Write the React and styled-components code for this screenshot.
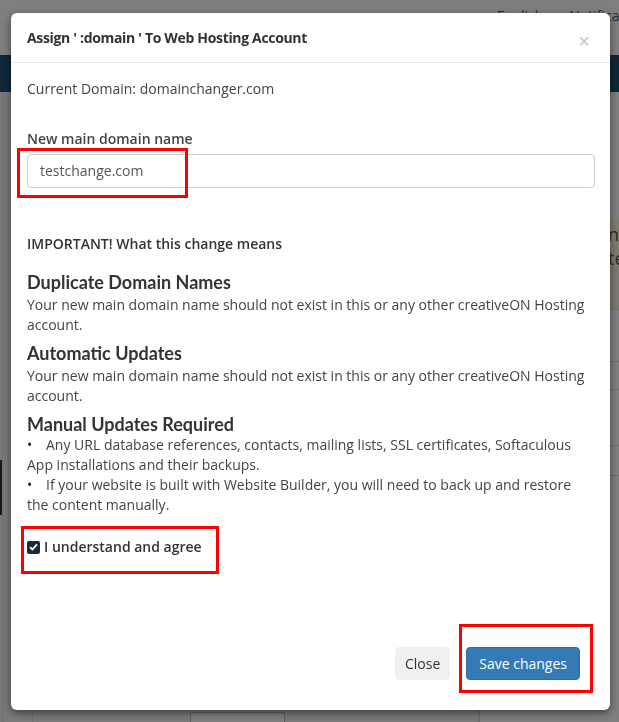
import React from "react"
import styled, { createGlobalStyle } from "styled-components"

const GlobalStyle = createGlobalStyle`
    html, body {
        margin: 0;
        padding: 0;
        background: #f4f4f4;
        font-family: "Open Sans", "Liberation Sans", sans-serif;
        overflow: hidden;
    }
    * {
        box-sizing: border-box;
    }
`;

/* page behind the dialog */

const Page = styled.div`
    width: 619px;
    height: 722px;
    overflow: hidden;
    background: #f4f4f4;
`;

const TopBar = styled.div`
    height: 55px;
    background: #fff;
    display: flex;
    gap: 26px;
    padding: 6px 0 0 497px;
    font-size: 14px;
    color: #555;
    white-space: nowrap;
    overflow: hidden;
`;

const NavBar = styled.div`
    height: 37px;
    background: #1d4e6e;
`;

const Content = styled.div`
    display: grid;
    grid-template-columns: 3px 30px 1fr 25px 140px;
    height: 630px;
`;

const Rail = styled.div`
    border-right: 1px solid #ddd;
    padding-top: 368px;
`;

const RailBlock = styled.div`
    height: 55px;
    background: #333;
`;

const Gutter = styled.div`
    border-right: 1px solid #ddd;
`;

const MainCol = styled.div`
    display: flex;
    flex-direction: column;
    justify-content: flex-end;
    padding: 0 0 0 157px;
`;

const SmallButton = styled.div`
    width: 95px;
    height: 10px;
    border: 1px solid #bbb;
    border-bottom: none;
    border-radius: 3px 3px 0 0;
    background: #fff;
`;

const Sidebar = styled.div`
    border-left: 1px solid #ddd;
    padding-top: 126px;
    display: flex;
    flex-direction: column;
    background: #fff;
    overflow: hidden;
`;

const Alert = styled.div`
    height: 50px;
    background: #fcf8d8;
    color: #555;
    font-size: 18px;
    line-height: 24px;
    padding: 4px 0 0 128px;
    white-space: nowrap;
`;

const Note = styled.div`
    height: 42px;
    background: #f7f0df;
    border-bottom: 1px solid #ddd;
`;

const Row = styled.div`
    height: ${p => p.h}px;
    border-bottom: 1px solid #ddd;
    font-size: 14px;
    color: ${p => p.c || "#555"};
    font-style: ${p => p.i ? "italic" : "normal"};
    padding: ${p => p.pt || 0}px 0 0 140px;
    white-space: nowrap;
`;

const BlueTab = styled.div`
    margin: 0 0 0 144px;
    width: 12px;
    height: 24px;
    background: #1d5f8e;
    border-radius: 3px 0 0 3px;
`;

const Backdrop = styled.div`
    position: fixed;
    inset: 0;
    background: rgba(0, 0, 0, 0.5);
`;

/* the dialog */

const Dialog = styled.div`
    position: fixed;
    top: 13px;
    left: 11px;
    width: 599px;
    background: #fff;
    border-radius: 6px;
    box-shadow: 0 3px 9px rgba(0, 0, 0, 0.5);
    color: #444;
`;

const Header = styled.div`
    height: 50px;
    border-bottom: 1px solid #e5e5e5;
    display: flex;
    align-items: center;
    justify-content: space-between;
    padding: 0 20px 0 16px;
`;

const Title = styled.h4`
    margin: 0;
    font-size: 14px;
    font-weight: 700;
    letter-spacing: -0.33px;
    color: #333;
`;

const CloseX = styled.span`
    font-size: 20px;
    color: #c4c4c4;
    font-family: "Liberation Sans", sans-serif;
    padding-top: 8px;
`;

const Body = styled.div`
    padding: 16px 15px 0 16px;
    font-size: 14px;
    line-height: 20px;
`;

const Line = styled.div`
    margin-top: ${p => p.mt || 0}px;
`;

const Label = styled.div`
    margin-top: 30px;
    font-weight: 600;
`;

const Annotated = styled.div`
    position: relative;
    margin-top: ${p => p.mt || 0}px;
`;

const RedBox = styled.div`
    position: absolute;
    border: 3px solid #f00;
    left: ${p => p.l}px;
    top: ${p => p.t}px;
    width: ${p => p.w}px;
    height: ${p => p.h}px;
    pointer-events: none;
`;

const Input = styled.div`
    height: 34px;
    border: 1px solid #ccc;
    border-radius: 4px;
    padding: 6px 12px;
    color: #555;
`;

const Important = styled.div`
    margin-top: 46px;
    font-weight: 600;
    font-size: 14px;
    color: #333;
`;

const Heading = styled.div`
    margin-top: ${p => p.mt}px;
    margin-bottom: ${p => p.mb}px;
    font-family: Lato, "Open Sans", sans-serif;
    font-weight: 700;
    font-size: 18px;
    line-height: 22px;
    color: #333;
`;

const Bullet = styled.div`
    &::before {
        content: "•";
        display: inline-block;
        width: 19px;
        color: #222;
    }
`;

const CheckRow = styled.label`
    display: flex;
    align-items: center;
    gap: 4px;
    font-weight: 600;
    font-size: 14px;
    color: #333;
`;

const Box = styled.span`
    width: 13px;
    height: 13px;
    border-radius: 2px;
    background: #1b2a3a;
    display: flex;
    align-items: center;
    justify-content: center;
`;

const Footer = styled.div`
    margin-top: 90px;
    display: flex;
    justify-content: flex-end;
    gap: 16px;
    padding: 0 30px 30px 0;
`;

const Button = styled.button`
    height: 33px;
    padding: 0 ${p => p.primary ? 12 : 9}px;
    font-family: "Open Sans", sans-serif;
    font-size: 14px;
    border-radius: 4px;
    border: 1px solid ${p => p.primary ? "#2e6da4" : "#f0f0f0"};
    background: ${p => p.primary ? "#337ab7" : "#f0f0f0"};
    color: ${p => p.primary ? "#fff" : "#333"};
`;

const App = () => {
    return (
        <>
            <GlobalStyle />
            <Page>
                <TopBar>
                    <span>English</span>
                    <span>Notifications</span>
                </TopBar>
                <NavBar />
                <Content>
                    <Rail><RailBlock /></Rail>
                    <Gutter />
                    <MainCol><SmallButton /></MainCol>
                    <Gutter />
                    <Sidebar>
                        <Alert>nt<br />te</Alert>
                        <Note />
                        <Row h={52} />
                        <Row h={28} />
                        <Row h={56} i pt={22}>SA</Row>
                        <Row h={30} c="#1d5f8e" pt={2}>w</Row>
                        <BlueTab />
                    </Sidebar>
                </Content>
            </Page>
            <Backdrop />
            <Dialog>
                <Header>
                    <Title>Assign ' :domain ' To Web Hosting Account</Title>
                    <CloseX>×</CloseX>
                </Header>
                <Body>
                    <Line>Current Domain: domainchanger.com</Line>
                    <Label>New main domain name</Label>
                    <Annotated mt={5}>
                        <Input>testchange.com</Input>
                        <RedBox l={-10} t={-6} w={171} h={50} />
                    </Annotated>
                    <Important>IMPORTANT! What this change means</Important>
                    <Heading mt={17} mb={2}>Duplicate Domain Names</Heading>
                    <Line>Your new main domain name should not exist in this or any other creativeON Hosting account.</Line>
                    <Heading mt={7} mb={2}>Automatic Updates</Heading>
                    <Line>Your new main domain name should not exist in this or any other creativeON Hosting account.</Line>
                    <Heading mt={7} mb={0}>Manual Updates Required</Heading>
                    <Bullet>Any URL database references, contacts, mailing lists, SSL certificates, Softaculous App installations and their backups.</Bullet>
                    <Bullet>If your website is built with Website Builder, you will need to back up and restore the content manually.</Bullet>
                    <Annotated mt={22}>
                        <CheckRow>
                            <Box>
                                <svg width="9" height="8" viewBox="0 0 9 8">
                                    <path d="M1 4.2 L3.4 6.5 L8 1.3" stroke="#fff" strokeWidth="1.8" fill="none" />
                                </svg>
                            </Box>
                            I understand and agree
                        </CheckRow>
                        <RedBox l={-6} t={-11} w={198} h={48} />
                    </Annotated>
                </Body>
                <Footer>
                    <Button>Close</Button>
                    <Annotated>
                        <Button primary>Save changes</Button>
                        <RedBox l={-7} t={-23} w={134} h={69} />
                    </Annotated>
                </Footer>
            </Dialog>
        </>
    )
}

export default App
